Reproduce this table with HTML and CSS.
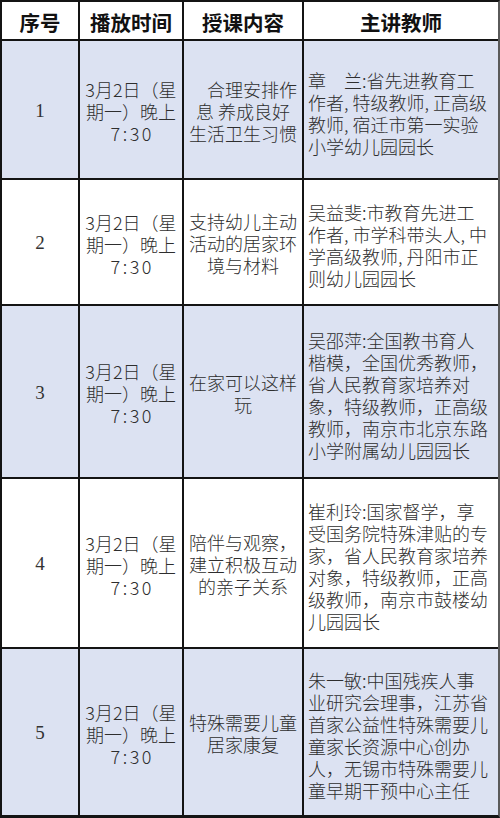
FILE: index.html
```html
<!DOCTYPE html>
<html lang="zh-CN">
<head>
<meta charset="utf-8">
<title>播放安排</title>
<link rel="stylesheet" href="styles.css">
</head>
<body>
<div class="schedule">
  <div class="cell head"><p class="lines">序号</p></div>
  <div class="cell head"><p class="lines">播放时间</p></div>
  <div class="cell head"><p class="lines">授课内容</p></div>
  <div class="cell head"><p class="lines">主讲教师</p></div>

  <div class="cell num alt"><p class="lines">1</p></div>
  <div class="cell time alt"><p class="lines">3月2日（星<br>期一）晚上<br><span class="clock">7:30</span></p></div>
  <div class="cell topic alt"><p class="lines">　合理安排作<br>息 养成良好<br>生活卫生习惯</p></div>
  <div class="cell teacher alt"><p class="lines">章　兰:省先进教育工<br>作者, 特级教师, 正高级<br>教师, 宿迁市第一实验<br>小学幼儿园园长</p></div>

  <div class="cell num"><p class="lines">2</p></div>
  <div class="cell time"><p class="lines">3月2日（星<br>期一）晚上<br><span class="clock">7:30</span></p></div>
  <div class="cell topic"><p class="lines">支持幼儿主动<br>活动的居家环<br>境与材料</p></div>
  <div class="cell teacher"><p class="lines">吴益斐:市教育先进工<br>作者, 市学科带头人, 中<br>学高级教师, 丹阳市正<br>则幼儿园园长</p></div>

  <div class="cell num alt"><p class="lines">3</p></div>
  <div class="cell time alt"><p class="lines">3月2日（星<br>期一）晚上<br><span class="clock">7:30</span></p></div>
  <div class="cell topic alt"><p class="lines">在家可以这样<br>玩</p></div>
  <div class="cell teacher alt"><p class="lines">吴邵萍:全国教书育人<br>楷模，全国优秀教师，<br>省人民教育家培养对<br>象，特级教师，正高级<br>教师，南京市北京东路<br>小学附属幼儿园园长</p></div>

  <div class="cell num"><p class="lines">4</p></div>
  <div class="cell time"><p class="lines">3月2日（星<br>期一）晚上<br><span class="clock">7:30</span></p></div>
  <div class="cell topic"><p class="lines">陪伴与观察，<br>建立积极互动<br>的亲子关系</p></div>
  <div class="cell teacher"><p class="lines">崔利玲:国家督学，享<br>受国务院特殊津贴的专<br>家，省人民教育家培养<br>对象，特级教师，正高<br>级教师，南京市鼓楼幼<br>儿园园长</p></div>

  <div class="cell num alt"><p class="lines">5</p></div>
  <div class="cell time alt"><p class="lines">3月2日（星<br>期一）晚上<br><span class="clock">7:30</span></p></div>
  <div class="cell topic alt"><p class="lines">特殊需要儿童<br>居家康复</p></div>
  <div class="cell teacher alt"><p class="lines">朱一敏:中国残疾人事<br>业研究会理事，江苏省<br>首家公益性特殊需要儿<br>童家长资源中心创办<br>人，无锡市特殊需要儿<br>童早期干预中心主任</p></div>
</div>
</body>
</html>
```

FILE: styles.css
```css
* { box-sizing: border-box; }

html, body {
  margin: 0;
  padding: 0;
  background: #ffffff;
}

.schedule {
  width: 500px;
  display: grid;
  grid-template-columns: 76px 102px 118px 194px;
  grid-template-rows: 37px 137px 124px 171px 168px 166px;
  gap: 2px;
  background: #141414;
  border: 2px solid #141414;
  border-right-color: #5a5a5a;
  border-bottom-width: 3px;
}

.cell {
  background: #ffffff;
  display: flex;
  align-items: center;
  justify-content: center;
  text-align: center;
  font-family: "Noto Sans CJK SC", "Noto Sans", sans-serif;
  font-size: 18px;
  line-height: 22px;
  font-weight: 300;
  color: #2e2e2e;
  white-space: nowrap;
}

.lines {
  margin: 0;
}

.cell.alt {
  background: #dce2f2;
}

.head {
  font-size: 20.5px;
  font-weight: 700;
  color: #111111;
  padding-top: 2px;
}

.num {
  font-family: "Liberation Serif", "Noto Sans CJK SC", serif;
  font-size: 19px;
  font-weight: 400;
  color: #333333;
  padding-top: 2px;
}

.time {
  padding-top: 3px;
}

.clock {
  letter-spacing: 2.5px;
  margin-right: -2.5px;
}

.topic {
  padding-top: 2px;
}

.teacher {
  justify-content: flex-start;
  text-align: left;
  padding-left: 4px;
  padding-top: 6px;
}
```
